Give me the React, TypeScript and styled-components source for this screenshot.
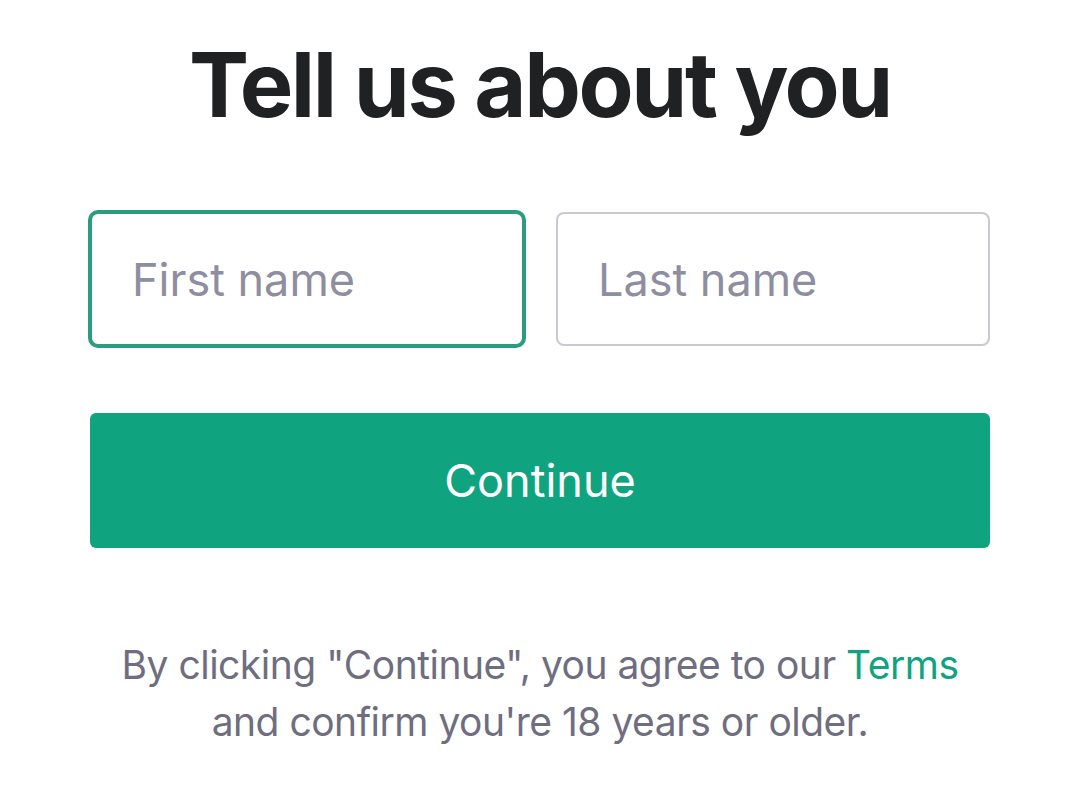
import React from 'react';
import styled, { createGlobalStyle } from 'styled-components';

const GREEN = '#10a37f';

const GlobalStyle = createGlobalStyle`
  html, body {
    margin: 0;
    padding: 0;
    background: #ffffff;
  }
  body {
    font-family: Inter, 'Noto Sans', 'Liberation Sans', sans-serif;
    -webkit-font-smoothing: antialiased;
  }
`;

const Page = styled.main`
  width: 900px;
  margin: 0 auto;
  padding-top: 33px;
  display: flex;
  flex-direction: column;
  align-items: stretch;
`;

const Title = styled.h1`
  margin: 0;
  text-align: center;
  font-size: 90px;
  line-height: 104px;
  font-weight: 700;
  letter-spacing: -2.4px;
  color: #202123;
`;

const NameRow = styled.div`
  display: grid;
  grid-template-columns: 1fr 1fr;
  gap: 32px;
  margin-top: 75px;
`;

const Field = styled.input<{ $focused?: boolean }>`
  box-sizing: border-box;
  width: 100%;
  height: 134px;
  padding: 0 40px;
  border-radius: 8px;
  border: 2px solid ${p => (p.$focused ? '#2a9d7e' : '#c9c9d1')};
  box-shadow: ${p => (p.$focused ? '0 0 0 2px #2a9d7e' : 'none')};
  background: #ffffff;
  font-family: inherit;
  font-size: 45px;
  color: #202123;
  outline: none;

  &::placeholder {
    color: #8e8ea0;
  }
`;

const ContinueButton = styled.button`
  margin-top: 67px;
  height: 135px;
  border: none;
  border-radius: 6px;
  background: ${GREEN};
  color: #ffffff;
  font-family: inherit;
  font-size: 45px;
  font-weight: 400;
  cursor: pointer;
`;

const Notice = styled.p`
  margin: 88px 0 0;
  text-align: center;
  font-size: 39px;
  line-height: 57px;
  letter-spacing: -0.5px;
  color: #6e6e80;
`;

const TermsLink = styled.a`
  color: ${GREEN};
  text-decoration: none;
`;

export default function App() {
  return (
    <>
      <GlobalStyle />
      <Page>
        <Title>Tell us about you</Title>
        <NameRow>
          <Field $focused placeholder="First name" />
          <Field placeholder="Last name" />
        </NameRow>
        <ContinueButton>Continue</ContinueButton>
        <Notice>
          By clicking "Continue", you agree to our <TermsLink href="#">Terms</TermsLink>
          <br />
          and confirm you're 18 years or older.
        </Notice>
      </Page>
    </>
  );
}
